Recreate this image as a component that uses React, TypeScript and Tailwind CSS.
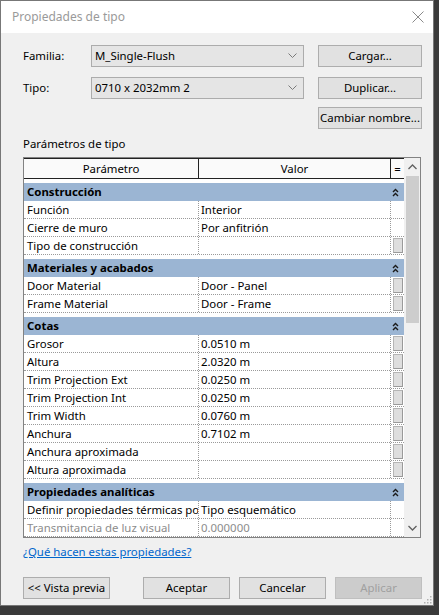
import React from 'react'

type Row = { name: string; value: string; btn: boolean; disabled?: boolean }
type Group = { title: string; rows: Row[] }

const groups: Group[] = [
  {
    title: 'Construcción',
    rows: [
      { name: 'Función', value: 'Interior', btn: false },
      { name: 'Cierre de muro', value: 'Por anfitrión', btn: false },
      { name: 'Tipo de construcción', value: '', btn: true },
    ],
  },
  {
    title: 'Materiales y acabados',
    rows: [
      { name: 'Door Material', value: 'Door - Panel', btn: true },
      { name: 'Frame Material', value: 'Door - Frame', btn: true },
    ],
  },
  {
    title: 'Cotas',
    rows: [
      { name: 'Grosor', value: '0.0510 m', btn: true },
      { name: 'Altura', value: '2.0320 m', btn: true },
      { name: 'Trim Projection Ext', value: '0.0250 m', btn: true },
      { name: 'Trim Projection Int', value: '0.0250 m', btn: true },
      { name: 'Trim Width', value: '0.0760 m', btn: true },
      { name: 'Anchura', value: '0.7102 m', btn: true },
      { name: 'Anchura aproximada', value: '', btn: true },
      { name: 'Altura aproximada', value: '', btn: true },
    ],
  },
  {
    title: 'Propiedades analíticas',
    rows: [
      { name: 'Definir propiedades térmicas por', value: 'Tipo esquemático', btn: false },
      { name: 'Transmitancia de luz visual', value: '0.000000', btn: false, disabled: true },
    ],
  },
]

function Chevron() {
  return (
    <svg width="9" height="6" viewBox="0 0 9 6" className="shrink-0">
      <path d="M0.5 0.5 L4.5 4.5 L8.5 0.5" fill="none" stroke="#7a7a7a" strokeWidth="1" />
    </svg>
  )
}

function Collapse() {
  return (
    <svg width="7" height="9" viewBox="0 0 7 9">
      <path d="M1 4 L3.5 1.5 L6 4 M1 8 L3.5 5.5 L6 8" fill="none" stroke="#1a1a1a" strokeWidth="1.4" />
    </svg>
  )
}

function Combo({ text }: { text: string }) {
  return (
    <div className="w-[213px] h-[22px] bg-[#e5e5e5] border border-[#acacac] flex items-center justify-between pl-[3px] pr-[6px]">
      <span>{text}</span>
      <Chevron />
    </div>
  )
}

function Btn({ label, className = '', disabled = false }: { label: string; className?: string; disabled?: boolean }) {
  return (
    <button
      type="button"
      className={`h-[22px] border flex items-center justify-center whitespace-nowrap ${disabled ? 'bg-[#cccccc] border-[#bfbfbf] text-[#a0a0a0]' : 'bg-[#e1e1e1] border-[#adadad] text-black'} ${className}`}
    >
      {label}
    </button>
  )
}

export default function App() {
  return (
    <div className="w-[439px] h-[615px] bg-[#3a3a3a] overflow-hidden font-['Segoe_UI','Noto_Sans',sans-serif] text-[11.4px] text-black">
      <div className="w-[434px] h-[606px] border border-[#777777] bg-[#f0f0f0] flex flex-col relative">
        <div className="h-[32px] bg-white flex items-center justify-between pl-[11px] pr-[9px] text-[#9a9a9a] text-[12px]">
          <span>Propiedades de tipo</span>
          <svg width="12" height="12" viewBox="0 0 12 12">
            <path d="M0.5 0.5 L11.5 11.5 M11.5 0.5 L0.5 11.5" stroke="#8a8a8a" strokeWidth="1" />
          </svg>
        </div>

        <div className="pl-[22px] pr-[11px] pt-[12px] flex flex-col">
          <div className="flex items-center">
            <span className="w-[68px]">Familia:</span>
            <Combo text="M_Single-Flush" />
            <Btn label="Cargar..." className="w-[104px] ml-[14px]" />
          </div>
          <div className="flex items-center mt-[10px]">
            <span className="w-[68px]">Tipo:</span>
            <Combo text="0710 x 2032mm 2" />
            <Btn label="Duplicar..." className="w-[104px] ml-[14px]" />
          </div>
          <div className="flex justify-end mt-[8px]">
            <Btn label="Cambiar nombre..." className="w-[104px]" />
          </div>

          <div className="mt-[6px] leading-[18px]">Parámetros de tipo</div>

          <div className="mt-[4px] w-[398px] h-[381px] border border-[#828282] bg-white flex overflow-hidden">
            <div className="w-[380px] flex flex-col">
              <div className="h-[21px] shrink-0 flex border-t border-b border-[#222222] bg-[#fafafa]">
                <div className="w-[175px] border-r border-[#222222] flex items-center justify-center">Parámetro</div>
                <div className="w-[192px] border-r border-[#222222] flex items-center justify-center">Valor</div>
                <div className="w-[13px] flex items-center justify-center">=</div>
              </div>
              {groups.map((g) => (
                <div key={g.title} className="flex flex-col">
                  <div className="pt-[4px] bg-white">
                    <div className="h-[18px] bg-[#9bb5d3] flex items-center justify-between pl-[3px] pr-[5px] font-bold">
                      <span>{g.title}</span>
                      <Collapse />
                    </div>
                  </div>
                  {g.rows.map((r) => (
                    <div key={r.name} className={`h-[18px] shrink-0 flex border-b border-dotted border-[#9a9a9a] ${r.disabled ? 'text-[#8c8c8c]' : ''}`}>
                      <div className="w-[175px] border-r border-dotted border-[#9a9a9a] pl-[3px] whitespace-nowrap overflow-hidden leading-[17px]">{r.name}</div>
                      <div className="w-[192px] border-r border-dotted border-[#9a9a9a] pl-[2px] whitespace-nowrap overflow-hidden leading-[17px]">{r.value}</div>
                      <div className="w-[13px] flex items-center justify-center">
                        {r.btn && <div className="w-[10px] h-[15px] bg-[#dedede] border border-[#b5b5b5] border-b-[#9a9a9a] border-r-[#9a9a9a]" />}
                      </div>
                    </div>
                  ))}
                </div>
              ))}
            </div>
            <div className="w-[16px] bg-[#f0f0f0] flex flex-col items-center">
              <div className="h-[18px] flex items-center justify-center">
                <svg width="9" height="6" viewBox="0 0 9 6">
                  <path d="M0.5 5 L4.5 1 L8.5 5" fill="none" stroke="#606060" strokeWidth="1.3" />
                </svg>
              </div>
              <div className="w-[13px] h-[147px] bg-[#cdcdcd]" />
              <div className="flex-1" />
              <div className="h-[18px] flex items-center justify-center">
                <svg width="9" height="6" viewBox="0 0 9 6">
                  <path d="M0.5 1 L4.5 5 L8.5 1" fill="none" stroke="#606060" strokeWidth="1.3" />
                </svg>
              </div>
            </div>
          </div>

          <div className="mt-[5px] leading-[18px]">
            <span className="text-[#0066cc] underline">¿Qué hacen estas propiedades?</span>
          </div>

          <div className="mt-[16px] flex items-center">
            <Btn label="<< Vista previa" className="w-[87px]" />
            <div className="ml-auto flex gap-[9px]">
              <Btn label="Aceptar" className="w-[87px]" />
              <Btn label="Cancelar" className="w-[87px]" />
              <Btn label="Aplicar" className="w-[87px]" disabled />
            </div>
          </div>
        </div>

        <svg width="8" height="8" viewBox="0 0 8 8" className="absolute right-[1px] bottom-[1px]">
          <rect x="6" y="0" width="1.5" height="1.5" fill="#b0b0b0" />
          <rect x="3" y="3" width="1.5" height="1.5" fill="#b0b0b0" />
          <rect x="6" y="3" width="1.5" height="1.5" fill="#b0b0b0" />
          <rect x="0" y="6" width="1.5" height="1.5" fill="#b0b0b0" />
          <rect x="3" y="6" width="1.5" height="1.5" fill="#b0b0b0" />
          <rect x="6" y="6" width="1.5" height="1.5" fill="#b0b0b0" />
        </svg>
      </div>
    </div>
  )
}
